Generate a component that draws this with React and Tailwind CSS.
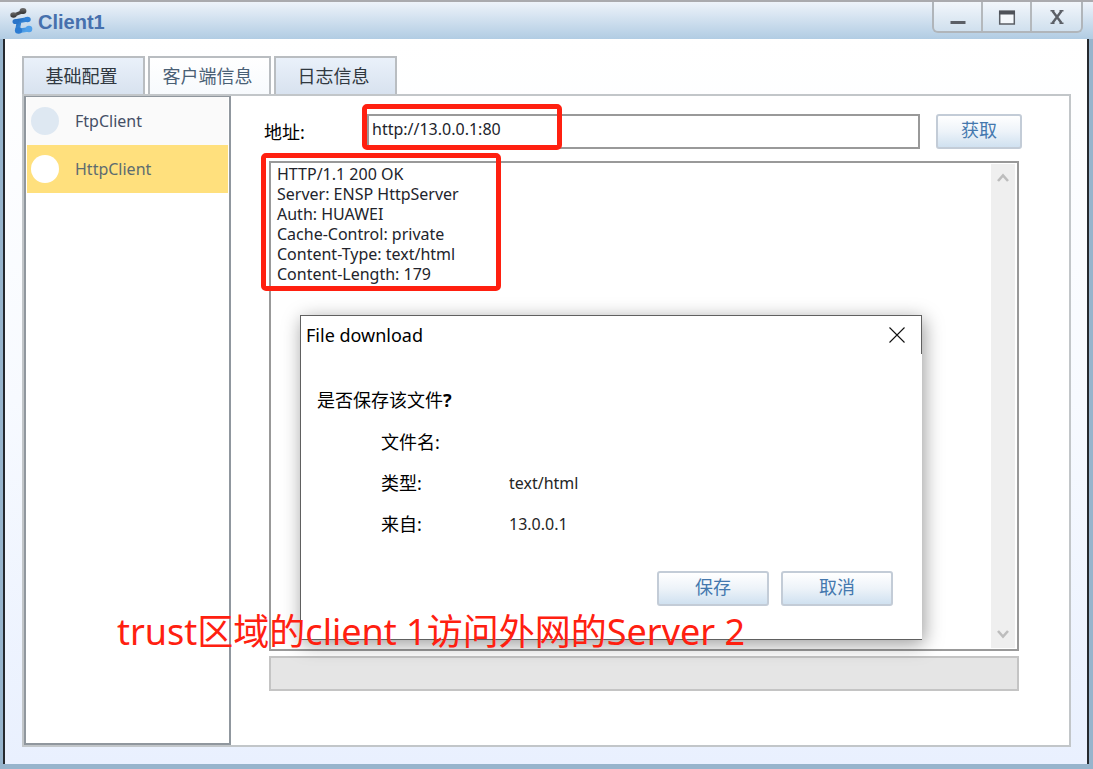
import React from "react";

const LATIN = "font-['Noto_Sans','Noto_Sans_CJK_SC',sans-serif]";

const RESPONSE = [
  "HTTP/1.1 200 OK",
  "Server: ENSP HttpServer",
  "Auth: HUAWEI",
  "Cache-Control: private",
  "Content-Type: text/html",
  "Content-Length: 179",
].join("\n");

function Logo() {
  return (
    <svg viewBox="0 0 24 28" className="h-7 w-6 shrink-0" aria-hidden="true">
      <defs>
        <linearGradient id="blueLogo" x1="0" y1="0" x2="1" y2="1">
          <stop offset="0" stopColor="#1c67bd" />
          <stop offset="1" stopColor="#55a7ee" />
        </linearGradient>
        <linearGradient id="darkLogo" x1="0" y1="0" x2="0" y2="1">
          <stop offset="0" stopColor="#707070" />
          <stop offset="1" stopColor="#303030" />
        </linearGradient>
      </defs>
      <path d="M4 8.500 L14 4.500" stroke="#484848" strokeWidth="3.200" fill="none" />
      <ellipse cx="4.500" cy="8" rx="3.200" ry="2.800" fill="url(#darkLogo)" />
      <ellipse cx="14" cy="4" rx="3.400" ry="2.900" fill="url(#darkLogo)" />
      <path d="M6.500 14.500 L18 12.500 M10 15 L8.500 23 M9 24 L19 22.500" stroke="url(#blueLogo)" strokeWidth="4.600" fill="none" />
      <ellipse cx="6.500" cy="14.500" rx="3" ry="2.600" fill="#2a74c8" />
      <ellipse cx="18.500" cy="12.500" rx="3.200" ry="2.800" fill="#2f80d6" />
      <ellipse cx="9.500" cy="23.500" rx="3.600" ry="3.200" fill="#2c7cd2" />
      <ellipse cx="20" cy="22" rx="3.300" ry="3.200" fill="#4fa0ea" />
    </svg>
  );
}

function TitleButton({ label, children, last }) {
  return (
    <button
      type="button"
      aria-label={label}
      className={
        "flex h-[29px] w-[49px] items-center justify-center " +
        (last ? "" : "border-r-2 border-[#b4b8bc]")
      }
    >
      {children}
    </button>
  );
}

function Tab({ children, active }) {
  return (
    <button
      type="button"
      role="tab"
      aria-selected={!!active}
      className={
        "h-[38px] w-[123px] border-2 border-b-0 border-[#b9bdc1] pr-1 text-lg leading-6 " +
        (active
          ? "bg-linear-to-b from-white to-[#f7fafd] text-[#4a6075]"
          : "bg-linear-to-b from-[#eaf1fa] to-[#d8e2ef] text-[#303840]")
      }
    >
      {children}
    </button>
  );
}

function PushButton({ children, width }) {
  return (
    <button
      type="button"
      className={
        "h-[35px] shrink-0 rounded-[3px] border-2 border-[#c3ccd7] bg-linear-to-b from-white via-[#edf3f9] to-[#d0e1f0] pb-1 text-lg leading-6 text-[#4478ae] " +
        width
      }
    >
      {children}
    </button>
  );
}

function Chevron({ down }) {
  return (
    <svg viewBox="0 0 12 10" className="h-[10px] w-3" aria-hidden="true">
      <path d={down ? "M1 2 L6 7.500 L11 2" : "M1 8 L6 2.500 L11 8"} fill="none" stroke="#bdbdbd" strokeWidth="2.600" />
    </svg>
  );
}

function DownloadDialog() {
  const rows = [
    ["文件名:", ""],
    ["类型:", "text/html"],
    ["来自:", "13.0.0.1"],
  ];
  return (
    <section
      role="dialog"
      aria-label="File download"
      className="absolute top-[313px] left-[300px] flex h-[325px] w-[622px] flex-col border border-r-0 border-[#606060] bg-white shadow-[2px_4px_18px_rgba(0,0,0,0.4)]"
    >
      <header className="flex h-[38px] items-center justify-between border-r border-[#606060] pr-[14px] pl-[5px]">
        <h2 className="text-lg leading-6 text-black">File download</h2>
        <button type="button" aria-label="Close" className="flex h-5 w-5 items-center justify-center">
          <svg viewBox="0 0 16 16" className="h-4 w-4" aria-hidden="true">
            <path d="M0.500 0.500 L15.500 15.500 M15.500 0.500 L0.500 15.500" stroke="#111" strokeWidth="1.100" />
          </svg>
        </button>
      </header>
      <div className="flex grow flex-col justify-between pt-[34px] pr-[29px] pb-[33px] pl-4">
        <div>
          <p className="text-lg leading-6 text-black">
            是否保存该文件<b>?</b>
          </p>
          <dl className="grid grid-cols-[128px_1fr] gap-y-[17px] pt-[18px] pl-16 leading-6">
            {rows.map(([name, value]) => (
              <React.Fragment key={name}>
                <dt className="text-lg leading-6 text-black">{name}</dt>
                <dd className="text-base leading-6 text-[#252525]">{value}</dd>
              </React.Fragment>
            ))}
          </dl>
        </div>
        <div className="flex justify-end gap-3">
          <PushButton width="w-28">保存</PushButton>
          <PushButton width="w-28">取消</PushButton>
        </div>
      </div>
    </section>
  );
}

export default function App() {
  return (
    <div
      className={
        "relative flex min-h-screen flex-col border-t-2 border-[#aaaaae] bg-[#97b4cc] " + LATIN
      }
    >
      <header className="flex h-[37px] items-start justify-between bg-linear-to-b from-[#eef3fa] to-[#b1cce3] pr-[10px] pl-[9px]">
        <div className="flex items-center gap-[5px] pt-1">
          <Logo />
          <h1 className="pt-[2px] font-['Liberation_Sans',sans-serif] text-xl leading-7 font-bold text-[#4670ad]">
            Client1
          </h1>
        </div>
        <div className="flex rounded-b-md border-2 border-t-0 border-[#b0b5ba] bg-linear-to-b from-[#f2f6fb] to-[#d0e0ee]">
          <TitleButton label="Minimize">
            <svg viewBox="0 0 18 18" className="h-[18px] w-[18px]" aria-hidden="true">
              <path d="M1.500 13 h15 v3 h-15z" fill="#5b5f66" />
            </svg>
          </TitleButton>
          <TitleButton label="Maximize">
            <svg viewBox="0 0 18 18" className="h-[18px] w-[18px]" aria-hidden="true">
              <path d="M1.700 3.500 h14.600 v12.500 h-14.600z" fill="#f4f8fc" stroke="#5b5f66" strokeWidth="1.500" />
              <path d="M1 2.500 h16 v4 h-16z" fill="#4e5259" />
            </svg>
          </TitleButton>
          <TitleButton label="Close" last>
            <svg viewBox="0 0 18 18" className="h-[18px] w-[18px]" aria-hidden="true">
              <path
                d="M4.500 3 L13.500 15 M13.500 3 L4.500 15"
                stroke="#5b5f66"
                strokeWidth="2.400"
              />
              <path d="M2.500 2.800 h4 M11.500 2.800 h4 M2.500 15.200 h4 M11.500 15.200 h4" stroke="#5b5f66" strokeWidth="1.400" />
            </svg>
          </TitleButton>
        </div>
      </header>

      <main className="mr-1 mb-[5px] ml-[3px] flex grow flex-col border-x-2 border-[#25292e] bg-linear-to-b from-white via-[#f7faff] to-[#e9f0fe] pt-[17px] pr-4 pb-[17px] pl-4">
        <div role="tablist" className="flex gap-[3px] pl-px">
          <Tab>基础配置</Tab>
          <Tab active>客户端信息</Tab>
          <Tab>日志信息</Tab>
        </div>

        <div className="ml-px flex grow border-2 border-[#c2c6c9] bg-white">
          <nav className="flex w-[207px] shrink-0 flex-col border-2 border-t border-[#90979e] px-px text-base">
            <a href="#ftp" className="flex h-12 items-center gap-4 bg-[#fafafa] pl-1 text-[#454f66]">
              <span className="h-7 w-7 rounded-full bg-[#dee8f2]" />
              FtpClient
            </a>
            <a href="#http" aria-current="page" className="flex h-12 items-center gap-4 bg-[#ffe07d] pl-1 text-[#5d6c70]">
              <span className="h-7 w-7 rounded-full bg-white" />
              HttpClient
            </a>
          </nav>

          <div className="flex grow flex-col pt-[18px] pr-[47px] pb-[54px] pl-[33px]">
            <div className="flex items-center">
              <label htmlFor="address" className="w-[103px] shrink-0 text-lg leading-6 text-black">
                地址:
              </label>
              <input
                id="address"
                type="text"
                defaultValue="http://13.0.0.1:80"
                className="mr-4 h-[35px] min-w-0 grow border-2 border-[#999] bg-white px-[3px] pb-[5px] text-base text-[#22242c] outline-none"
              />
              <PushButton width="w-[86px]">获取</PushButton>
            </div>

            <div className="mt-3 mr-[3px] ml-[5px] flex grow border-2 border-[#999] bg-white p-px">
              <textarea
                aria-label="Response"
                readOnly
                defaultValue={RESPONSE}
                className="grow resize-none overflow-hidden px-[5px] text-base leading-5 text-[#22242c] outline-none"
              />
              <div className="mr-px flex w-6 flex-col items-center justify-between bg-[#efefef] py-[9px]">
                <Chevron />
                <Chevron down />
              </div>
            </div>

            <div className="mt-[5px] mr-[3px] ml-[5px] h-[35px] border-2 border-[#c4c4c4] bg-[#e5e5e5]" />
          </div>
        </div>
      </main>

      <DownloadDialog />

      <div className="pointer-events-none absolute top-[102px] left-[362px] h-[46px] w-[200px] rounded-[5px] border-5 border-[#ff2010]" />
      <div className="pointer-events-none absolute top-[151px] left-[261px] h-[138px] w-[240px] rounded-[5px] border-5 border-[#ff2010]" />
      <p className="pointer-events-none absolute top-[606px] left-[117px] text-4xl leading-[48px] whitespace-nowrap text-[#ff2010]">
        trust区域的client 1访问外网的Server 2
      </p>
    </div>
  );
}
